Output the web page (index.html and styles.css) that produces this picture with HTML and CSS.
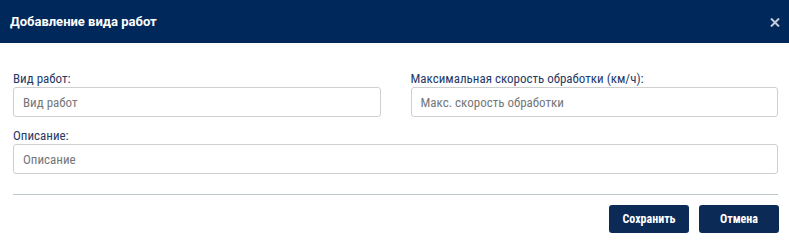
FILE: index.html
```html
<!DOCTYPE html>
<html lang="ru">
<head>
<meta charset="utf-8">
<link rel="stylesheet" href="styles.css">
</head>
<body>
<div class="modal">
  <div class="modal-header">
    <div class="modal-title">Добавление вида работ</div>
    <button class="close-btn" aria-label="Закрыть">
      <svg width="10" height="9" viewBox="0 0 10 9"><path d="M1 0.5 L9 8.5 M9 0.5 L1 8.5" stroke="#c4ccd8" stroke-width="2" fill="none"/></svg>
    </button>
  </div>
  <div class="modal-body">
    <div class="row two">
      <div class="field">
        <label class="field-label">Вид работ:</label>
        <input class="field-input" type="text" placeholder="Вид работ">
      </div>
      <div class="field">
        <label class="field-label">Максимальная скорость обработки (км/ч):</label>
        <input class="field-input" type="text" placeholder="Макс. скорость обработки">
      </div>
    </div>
    <div class="row">
      <div class="field">
        <label class="field-label">Описание:</label>
        <input class="field-input" type="text" placeholder="Описание">
      </div>
    </div>
    <div class="divider"></div>
    <div class="actions">
      <button class="btn">Сохранить</button>
      <button class="btn">Отмена</button>
    </div>
  </div>
</div>
</body>
</html>
```
FILE: styles.css
```css
html, body {
  margin: 0;
  padding: 0;
  background: #ffffff;
}
.modal {
  width: 789px;
  font-family: "Roboto", "Noto Sans", sans-serif;
}
.modal-header {
  height: 43px;
  box-sizing: border-box;
  background: #01285a;
  padding: 0 9px 0 10px;
  display: flex;
  align-items: center;
  justify-content: space-between;
}
.modal-title {
  color: #ffffff;
  font-weight: 700;
  font-size: 13px;
  line-height: 15px;
  margin-top: -1px;
}
.close-btn {
  border: 0;
  background: transparent;
  padding: 0;
  width: 10px;
  height: 9px;
  display: flex;
  margin-top: 1px;
}
.modal-body {
  padding: 28px 11px 0 13px;
}
.row {
  margin-bottom: 11px;
}
.row.two {
  display: grid;
  grid-template-columns: 1fr 1fr;
  column-gap: 30px;
}
.field {
  display: flex;
  flex-direction: column;
}
.field-label {
  font-family: "Roboto", sans-serif;
  font-stretch: condensed;
  font-size: 13px;
  line-height: 16px;
  color: #1f3a68;
}
.field-input {
  box-sizing: border-box;
  height: 30px;
  border: 1px solid #cfcfcf;
  border-radius: 3px;
  padding: 0 9px;
  font-family: "Roboto", sans-serif;
  font-stretch: condensed;
  font-size: 13px;
  color: #333;
  outline: none;
  margin: 0;
}
.field-input::placeholder {
  color: #74777a;
  opacity: 1;
}
.divider {
  height: 1px;
  background: #bcc7cb;
  margin-top: 20px;
}
.actions {
  display: flex;
  justify-content: flex-end;
  gap: 10px;
  padding-top: 10px;
  margin-right: -1px;
}
.btn {
  width: 80px;
  height: 28px;
  border: 0;
  border-radius: 3px;
  background: #0b2a55;
  color: #ffffff;
  font-family: "Roboto", sans-serif;
  font-stretch: condensed;
  font-weight: 700;
  font-size: 12px;
  padding: 0;
}
```
